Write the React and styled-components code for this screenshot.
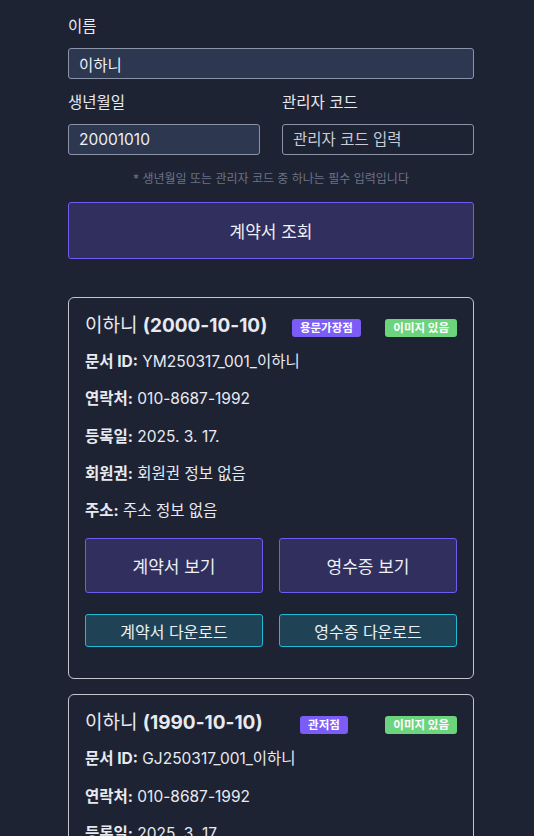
import styled, { createGlobalStyle } from 'styled-components';

const GlobalStyle = createGlobalStyle`
  html, body {
    margin: 0;
    background: #1e2334;
    color: #e8eaf0;
    font-family: Inter, "Noto Sans CJK KR", sans-serif;
  }
  * { box-sizing: border-box; }
`;

const contracts = [
    { name: '이하니', birth: '2000-10-10', branch: '용문가장점', docId: 'YM250317_001_이하니', phone: '010-8687-1992', date: '2025. 3. 17.', member: '회원권 정보 없음', address: '주소 정보 없음' },
    { name: '이하니', birth: '1990-10-10', branch: '관저점', docId: 'GJ250317_001_이하니', phone: '010-8687-1992', date: '2025. 3. 17.', member: '회원권 정보 없음', address: '주소 정보 없음' },
];

function App() {
    return (
        <Page>
            <GlobalStyle />
            <Field>
                <Label>이름</Label>
                <Input defaultValue="이하니" />
            </Field>
            <Row>
                <Field>
                    <Label>생년월일</Label>
                    <Input defaultValue="20001010" />
                </Field>
                <Field>
                    <Label>관리자 코드</Label>
                    <Input $empty placeholder="관리자 코드 입력" />
                </Field>
            </Row>
            <Hint>* 생년월일 또는 관리자 코드 중 하나는 필수 입력입니다</Hint>
            <SearchButton>계약서 조회</SearchButton>

            <List>
                {contracts.map((c, i) => (
                    <Card key={i}>
                        <CardHead>
                            <Title>{c.name} <b>({c.birth})</b></Title>
                            <Badge $color="#7b5cf6">{c.branch}</Badge>
                            <Badge $color="#6dd47e">이미지 있음</Badge>
                        </CardHead>
                        <Info><b>문서 ID:</b> {c.docId}</Info>
                        <Info><b>연락처:</b> {c.phone}</Info>
                        <Info><b>등록일:</b> {c.date}</Info>
                        <Info><b>회원권:</b> {c.member}</Info>
                        <Info><b>주소:</b> {c.address}</Info>
                        <Buttons>
                            <ViewButton>계약서 보기</ViewButton>
                            <ViewButton>영수증 보기</ViewButton>
                            <DownButton>계약서 다운로드</DownButton>
                            <DownButton>영수증 다운로드</DownButton>
                        </Buttons>
                    </Card>
                ))}
            </List>
        </Page>
    )
} export default App

const Page = styled.div`
  width: 406px;
  margin-left: 68px;
  padding-top: 16px;
  display: flex;
  flex-direction: column;
`
const Field = styled.div`
  display: flex;
  flex-direction: column;
  flex: 1;
  min-width: 0;
  margin-bottom: 14px;
`
const Label = styled.label`
  font-size: 15.5px;
  line-height: 22px;
  margin-bottom: 10px;
  color: #e8eaf0;
`
const Input = styled.input`
  width: 100%;
  height: 31px;
  padding: 0 10px;
  font-size: 15.5px;
  font-family: inherit;
  color: #eef0f5;
  background: ${p => p.$empty ? '#1e2334' : '#2d3750'};
  border: 1px solid #8b93a7;
  border-radius: 3px;
  outline: none;
  &::placeholder { color: #c9ccd4; }
`
const Row = styled.div`
  display: flex;
  gap: 22px;
  margin-top: -1px;
`
const Hint = styled.p`
  margin: 0 0 16px;
  text-align: center;
  font-size: 12px;
  color: #6c7386;
`
const SearchButton = styled.button`
  height: 57px;
  background: #302f5e;
  border: 1px solid #6c5cf0;
  border-radius: 3px;
  color: #eef0f5;
  font-size: 17px;
  font-family: inherit;
`
const List = styled.div`
  margin-top: 38px;
  display: flex;
  flex-direction: column;
  gap: 15px;
`
const Card = styled.div`
  border: 1px solid #c3c6cd;
  border-radius: 6px;
  padding: 14px 16px 31px;
`
const CardHead = styled.div`
  display: flex;
  justify-content: space-between;
  align-items: center;
  margin-bottom: 3px;
`
const Title = styled.h3`
  margin: 0;
  font-size: 19px;
  font-weight: 400;
  line-height: 28px;
  b { font-weight: 700; }
`
const Badge = styled.span`
  margin-top: 4px;
  padding: 1px 8px;
  border-radius: 3px;
  background: ${p => p.$color};
  color: #fff;
  font-size: 11.5px;
  font-weight: 700;
  line-height: 16px;
`
const Info = styled.p`
  margin: 0;
  font-size: 15.5px;
  line-height: 37.3px;
  b { font-weight: 700; }
`
const Buttons = styled.div`
  margin-top: 9px;
  display: grid;
  grid-template-columns: 1fr 1fr;
  column-gap: 16px;
  row-gap: 21px;
`
const ViewButton = styled.button`
  height: 55px;
  background: #302f5e;
  border: 1px solid #6c5cf0;
  border-radius: 3px;
  color: #eef0f5;
  font-size: 17px;
  font-family: inherit;
`
const DownButton = styled.button`
  height: 33px;
  background: #1f4355;
  border: 1px solid #22b8d6;
  border-radius: 3px;
  color: #eef0f5;
  font-size: 16px;
  font-family: inherit;
`
